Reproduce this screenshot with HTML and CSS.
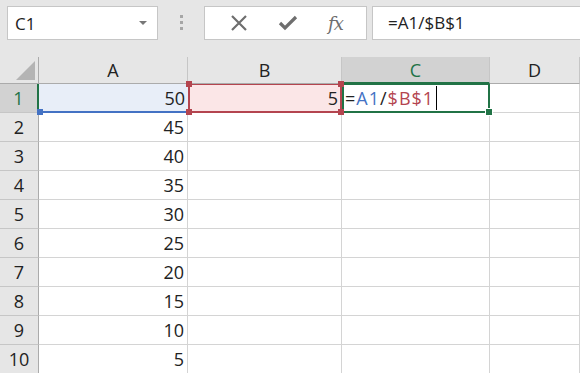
FILE: index.html
```html
<!DOCTYPE html>
<html lang="en">

<head>
  <meta charset="UTF-8">
  <title>Hoja de cálculo</title>
  <link rel="stylesheet" href="styles.css">
</head>

<body>
  <div class="barra">
    <div class="nombre">
      <span>C1</span>
      <span class="flecha"></span>
    </div>
    <div class="puntos"><i></i><i></i><i></i></div>
    <div class="acciones">
      <svg width="18" height="18" viewBox="0 0 18 18"><path d="M2 2 L16 16 M16 2 L2 16" stroke="#6e6e6e" stroke-width="2.2" fill="none"/></svg>
      <svg width="20" height="18" viewBox="0 0 20 18"><path d="M2 9 L7 14 L18 3" stroke="#6e6e6e" stroke-width="3.2" fill="none"/></svg>
      <span class="fx">fx</span>
    </div>
    <div class="formula">=A1/$B$1</div>
  </div>

  <div class="hoja">
    <div class="esquina"></div>
    <div class="col">A</div>
    <div class="col">B</div>
    <div class="col activa">C</div>
    <div class="col">D</div>

    <div class="fila activa">1</div>
    <div class="celda num ref-a">50<b class="p bl"></b></div>
    <div class="celda num ref-b">5<b class="p tl"></b><b class="p bl"></b><b class="p tr"></b><b class="p br"></b></div>
    <div class="celda editando">=<span class="azul">A1</span>/<span class="rojo">$B$1</span><span class="cursor"></span><b class="relleno"></b></div>
    <div class="celda"></div>
  </div>

  <script>
    const valores = [45, 40, 35, 30, 25, 20, 15, 10, 5];
    const hoja = document.querySelector('.hoja');
    valores.forEach((v, i) => {
      hoja.insertAdjacentHTML('beforeend',
        `<div class="fila">${i + 2}</div>
         <div class="celda num">${v}</div>
         <div class="celda"></div>
         <div class="celda"></div>
         <div class="celda"></div>`);
    });
  </script>
</body>

</html>
```

FILE: styles.css
```css
body {
  margin: 0;
  font-family: "Open Sans", "Noto Sans", sans-serif;
  background-color: #fff;
  color: #222;
  overflow: hidden;
}

.barra {
  display: flex;
  height: 57px;
  box-sizing: border-box;
  padding: 6px 0 0 7px;
  background-color: #e6e6e6;
}

.nombre {
  width: 151px;
  height: 34px;
  box-sizing: border-box;
  border: 1px solid #c6c6c6;
  background-color: #fff;
  display: flex;
  align-items: center;
  justify-content: space-between;
  padding: 0 10px 0 7px;
  font-size: 17px;
}

.flecha {
  border-left: 4px solid transparent;
  border-right: 4px solid transparent;
  border-top: 4px solid #777;
}

.puntos {
  width: 46px;
  display: flex;
  flex-direction: column;
  align-items: center;
  padding-top: 9px;
  gap: 3px;
}

.puntos i {
  width: 3px;
  height: 3px;
  background-color: #a6a6a6;
}

.acciones {
  width: 163px;
  height: 34px;
  box-sizing: border-box;
  border: 1px solid #c6c6c6;
  background-color: #fff;
  display: flex;
  align-items: center;
  justify-content: space-around;
  padding: 0 8px 0 10px;
}

.fx {
  font-family: "DejaVu Serif", "Liberation Serif", serif;
  font-style: italic;
  font-size: 18px;
  color: #6e6e6e;
  letter-spacing: -1px;
}

.formula {
  flex: 1;
  height: 34px;
  box-sizing: border-box;
  margin-left: 5px;
  border: 1px solid #c6c6c6;
  border-right: none;
  background-color: #fff;
  padding-left: 15px;
  line-height: 32px;
  font-size: 17px;
}

.hoja {
  display: grid;
  grid-template-columns: 39px 149px 154px 148px 1fr;
  grid-auto-rows: 29px;
  grid-template-rows: 27px;
  font-size: 18px;
}

.esquina,
.col,
.fila {
  background-color: #e6e6e6;
  border-right: 1px solid #ababab;
  border-bottom: 1px solid #ababab;
  box-sizing: border-box;
  display: flex;
  align-items: center;
  justify-content: center;
}

.col {
  border-right-color: #c6c6c6;
}

.fila {
  border-bottom-color: #c6c6c6;
}

.esquina {
  position: relative;
}

.esquina::after {
  content: "";
  position: absolute;
  right: 3px;
  bottom: 3px;
  border-left: 19px solid transparent;
  border-bottom: 19px solid #b4b4b4;
}

.col.activa {
  background-color: #d2d2d2;
  color: #217346;
  border-bottom: 2px solid #217346;
}

.fila.activa {
  background-color: #d2d2d2;
  color: #217346;
  border-right: 2px solid #217346;
}

.celda {
  position: relative;
  border-right: 1px solid #d4d4d4;
  border-bottom: 1px solid #d4d4d4;
  box-sizing: border-box;
  display: flex;
  align-items: center;
  padding: 0 3px;
  white-space: nowrap;
}

.num {
  justify-content: flex-end;
}

.ref-a {
  background-color: #e8eef8;
  border-bottom: 2px solid #4472c4;
  border-right: none;
}

.ref-b {
  background-color: #fbe6e7;
  border: 2px solid #b4454f;
  border-top-width: 1px;
  padding-right: 2px;
}

.p {
  position: absolute;
  width: 6px;
  height: 6px;
  background-color: #b4454f;
  z-index: 2;
}

.ref-a .p {
  background-color: #4472c4;
  left: -2px;
  bottom: -4px;
}

.ref-b .tl { left: -4px; top: -4px; }
.ref-b .bl { left: -4px; bottom: -4px; }
.ref-b .tr { right: -4px; top: -4px; }
.ref-b .br { right: -4px; bottom: -4px; }

.editando {
  border: 2px solid #217346;
  border-top-width: 1px;
  padding-left: 1px;
  letter-spacing: 1px;
}

.azul {
  color: #4472c4;
}

.rojo {
  color: #b4454f;
}

.cursor {
  width: 1px;
  height: 24px;
  background-color: #000;
  margin-left: 2px;
}

.relleno {
  position: absolute;
  right: -5px;
  bottom: -5px;
  width: 8px;
  height: 8px;
  background-color: #217346;
  border: 1px solid #fff;
  box-sizing: border-box;
  z-index: 2;
}
```
